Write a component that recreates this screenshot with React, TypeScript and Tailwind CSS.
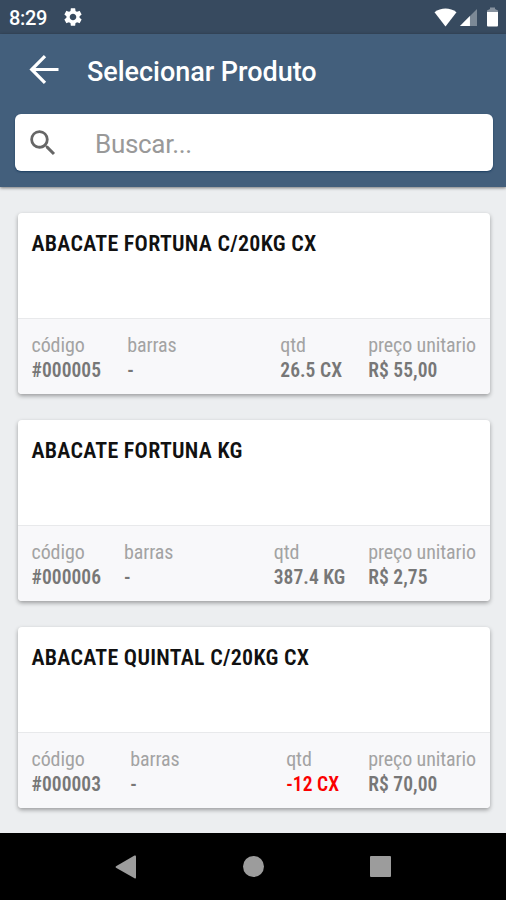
import type { ReactNode } from "react";
import clsx from "clsx";
import { MdSearch, MdSettings } from "react-icons/md";

type Product = {
	name: string;
	code: string;
	barcode: string;
	quantity: string;
	price: string;
	negative?: boolean;
};

const products: Product[] = [
	{ name: "ABACATE FORTUNA C/20KG CX", code: "#000005", barcode: "-", quantity: "26.5 CX", price: "R$ 55,00" },
	{ name: "ABACATE FORTUNA KG", code: "#000006", barcode: "-", quantity: "387.4 KG", price: "R$ 2,75" },
	{
		name: "ABACATE QUINTAL C/20KG CX",
		code: "#000003",
		barcode: "-",
		quantity: "-12 CX",
		price: "R$ 70,00",
		negative: true,
	},
];

function StatusBar() {
	return (
		<div className="flex h-[34px] shrink-0 items-center justify-between bg-[#374a5f] pr-[7px] pl-[9px] text-white">
			<div className="flex items-center gap-[14px]">
				<span className="w-[39px] pt-0.5 text-[20px] leading-8 font-medium tracking-[-0.3px]">8:29</span>
				<MdSettings size={22} />
			</div>
			<div className="flex items-center">
				<svg className="mr-[3px]" width="23" height="19" viewBox="0 0 23 19" fill="currentColor">
					<path d="M0.5 4.2C7 -0.8 16 -0.8 22.5 4.2L11.5 18.5Z" />
				</svg>
				<svg className="mt-px mr-[9px]" width="17" height="17" viewBox="0 0 18 18" fill="currentColor">
					<path d="M0 18L18 0V18Z" opacity="0.35" />
					<path d="M0 18L10.5 7.5V18Z" />
				</svg>
				<svg width="13" height="20" viewBox="0 0 13 20" fill="currentColor">
					<path d="M1 5V3.5L4 2V0.5H9V2L12 3.5V5Z" opacity="0.4" />
					<path d="M1 5H12V18.5Q12 19.5 11 19.5H2Q1 19.5 1 18.5Z" />
				</svg>
			</div>
		</div>
	);
}

function Header() {
	return (
		<header className="z-10 h-[153px] shrink-0 bg-[#435f7c] pr-[13px] pl-[15px] shadow-[0_1px_3px_rgba(0,0,0,0.5)]">
			<div className="flex h-20 items-center pl-[14px]">
				<svg className="-mt-2.5" width="30" height="30" viewBox="0 0 30 30" fill="none" stroke="white" strokeWidth="3.2">
					<path d="M29.5 15.5H3M16 2.2L2.7 15.5L16 28.8" />
				</svg>
				<h1 className="-mt-1 ml-7 text-[27px] leading-8 font-medium tracking-[-0.04px] text-white">Selecionar Produto</h1>
			</div>
			<div className="flex h-[57px] w-full items-center rounded-md bg-white pl-[11px] shadow-[0_1px_2px_rgba(0,40,80,0.6)]">
				<MdSearch size={34} className="text-[#666]" />
				<span className="ml-[35px] pt-[3px] text-[26px] tracking-[-0.3px] text-[#999]">Buscar...</span>
			</div>
		</header>
	);
}

function Field({ label, negative, className, children }: { label: string; negative?: boolean; className?: string; children: ReactNode }) {
	return (
		<div className={clsx("whitespace-nowrap", className)}>
			<div className="text-[20px] leading-[25px] tracking-[-0.1px] text-[#a3a3a3]">{label}</div>
			<div
				className={clsx(
					"text-[19.5px] leading-[25px] font-semibold tracking-[0.05px]",
					negative ? "text-[#fb0000]" : "text-[#777]",
				)}
			>
				{children}
			</div>
		</div>
	);
}

function ProductCard({ product }: { product: Product }) {
	return (
		<article className="h-[181px] overflow-hidden rounded bg-white font-['Roboto_Condensed',Roboto,sans-serif] shadow-[0_2px_4px_rgba(0,0,0,0.35)] [font-stretch:75%]">
			<h2 className="h-[105px] pt-[17px] pl-[13.5px] text-[22px] leading-[27px] font-semibold tracking-[0.28px] text-[#111]">
				{product.name}
			</h2>
			<div className="flex h-[76px] justify-between border-t border-[#e8e9eb] bg-[#f8f8fa] pt-[14px] pr-[14px] pl-[13.5px]">
				<Field label="código">{product.code}</Field>
				<Field label="barras" className="w-[127px]">
					{product.barcode}
				</Field>
				<Field label="qtd" negative={product.negative}>
					{product.quantity}
				</Field>
				<Field label="preço unitario">{product.price}</Field>
			</div>
		</article>
	);
}

function NavigationBar() {
	return (
		<nav className="flex h-[67px] shrink-0 items-center justify-between bg-black pr-[115px] pl-[115px] text-[#9c9c9c]">
			<svg width="22" height="24" viewBox="0 0 22 24" fill="currentColor">
				<path d="M1 11.2L19.5 0.6Q21 0 21 1.5V22.5Q21 24 19.5 23.3L1 12.8Q0 12 1 11.2Z" />
			</svg>
			<div className="size-[21px] rounded-full bg-[#9c9c9c]" />
			<div className="size-[21px] rounded-[1px] bg-[#9c9c9c]" />
		</nav>
	);
}

export default function App() {
	return (
		<div className="flex h-[900px] w-[506px] flex-col overflow-hidden bg-[#eceef0] font-[Roboto,sans-serif]">
			<StatusBar />
			<Header />
			<main className="flex min-h-0 flex-1 flex-col gap-[25.75px] pt-[26px] pr-4 pl-[18px]">
				{products.map((product) => (
					<ProductCard key={product.code} product={product} />
				))}
			</main>
			<NavigationBar />
		</div>
	);
}
